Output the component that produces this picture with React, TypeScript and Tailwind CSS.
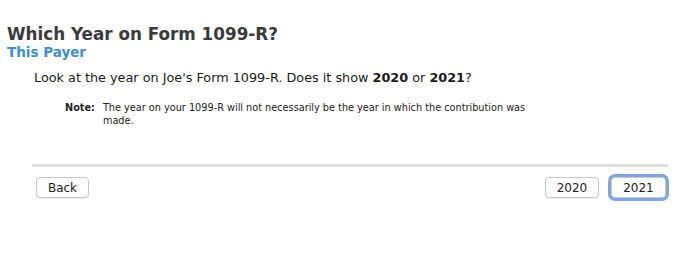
export default function App() {
  return (
    <div className="w-[682px] h-[265px] bg-white font-['DejaVu_Sans',sans-serif] text-[#222]">
      <div className="px-[7px] pt-[24px]">
        <h1 className="text-[16.8px] leading-[20px] font-bold text-[#3a3a3a]">Which Year on Form 1099-R?</h1>
        <h2 className="text-[13.5px] leading-[17px] font-bold text-[#3d8fd1]">This Payer</h2>
      </div>
      <p className="ml-[34px] mt-[8px] text-[12.8px] leading-[17px] text-[#1a1a1a]">
        Look at the year on Joe's Form 1099-R. Does it show <b>2020</b> or <b>2021</b>?
      </p>
      <div className="ml-[65px] mt-[15px] flex gap-[8px] text-[10.8px] leading-[13px] w-[480px] font-['DejaVu_Sans_Condensed','DejaVu_Sans',sans-serif]">
        <span className="font-bold shrink-0">Note:</span>
        <span>The year on your 1099-R will not necessarily be the year in which the contribution was made.</span>
      </div>
      <div className="ml-[32px] mt-[37px] mr-[14px] h-[3px] bg-[#dedede]" />
      <div className="flex items-center justify-between ml-[36px] mr-[16px] mt-[10px]">
        <button className="w-[53px] h-[21px] rounded-[4px] border border-[#c8c8c8] bg-white text-[12px] shadow-[0_1px_1px_rgba(0,0,0,0.08)]">Back</button>
        <div className="flex items-center gap-[12px]">
          <button className="w-[54px] h-[21px] rounded-[4px] border border-[#c8c8c8] bg-white text-[12px] shadow-[0_1px_1px_rgba(0,0,0,0.08)]">2020</button>
          <button className="w-[55px] h-[21px] rounded-[4px] border border-[#c8c8c8] bg-white text-[12px] ring-[3px] ring-[#7fa5e6]">2021</button>
        </div>
      </div>
    </div>
  );
}
